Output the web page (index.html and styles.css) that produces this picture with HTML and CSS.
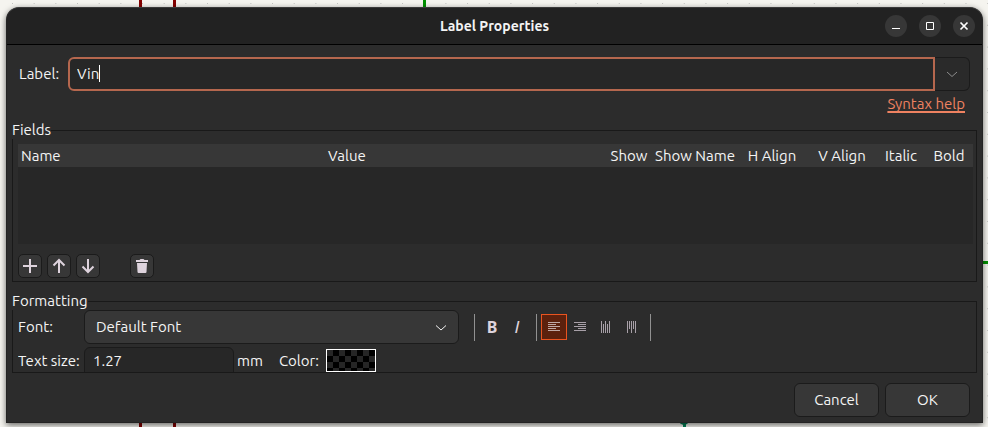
FILE: index.html
```html
<!DOCTYPE html>
<html lang="en">
<head>
<meta charset="utf-8">
<title>Label Properties</title>
<link rel="stylesheet" href="styles.css">
</head>
<body>
<svg class="canvas" aria-hidden="true">
  <defs>
    <pattern id="grid" x="12" y="3" width="21.67" height="21.8" patternUnits="userSpaceOnUse"><rect width="1" height="1" fill="#c4c4c2"/></pattern>
  </defs>
  <rect width="100%" height="100%" fill="url(#grid)"/>
  <path d="M140.500 0V500M174.500 0V500" stroke="#840000" stroke-width="3"/>
  <path d="M424.500 0V20M970 262.500H1000" stroke="#009100" stroke-width="3"/>
  <circle cx="684" cy="420" r="5" fill="#008458"/>
  <path d="M684.500 420V430" stroke="#008458" stroke-width="3"/>
</svg>
<main class="dialog">
  <header class="titlebar">
    <h1>Label Properties</h1>
    <div class="window-buttons">
      <button type="button" aria-label="Minimize"><svg width="22" height="22"><path d="M7 13.500H15"/></svg></button>
      <button type="button" aria-label="Maximize"><svg width="22" height="22"><path d="M7.500 7.500H14.500V14.500H7.500Z"/></svg></button>
      <button type="button" aria-label="Close"><svg width="22" height="22"><path d="M7.500 7.500L14.500 14.500M14.500 7.500L7.500 14.500" stroke-width="1.700"/></svg></button>
    </div>
  </header>
  <form class="content">
    <div class="label-row">
      <label for="net-label">Label:</label>
      <div class="combo">
        <input id="net-label" type="text" value="Vin">
        <span class="caret"></span>
        <button type="button" aria-label="Show labels"><svg width="12" height="8"><path d="M1 2L6 6.500L11 2"/></svg></button>
      </div>
    </div>
    <div class="help"><a href="#">Syntax help</a></div>

    <fieldset class="fields">
      <legend>Fields</legend>
      <div class="grid-area">
        <table>
          <colgroup><col class="c-name"><col><col class="c-show"><col class="c-showname"><col class="c-align"><col class="c-align"><col class="c-style"><col class="c-style"></colgroup>
          <thead><tr><th>Name</th><th>Value</th><th>Show</th><th>Show Name</th><th>H Align</th><th>V Align</th><th>Italic</th><th>Bold</th></tr></thead>
        </table>
      </div>
      <div class="row-tools">
        <button type="button" aria-label="Add field"><svg width="16" height="16"><path d="M8 1V15M1 8H15"/></svg></button>
        <button type="button" aria-label="Move up"><svg width="16" height="16"><path d="M8 15V2M2.500 7.500L8 2L13.500 7.500"/></svg></button>
        <button type="button" aria-label="Move down"><svg width="16" height="16"><path d="M8 1V14M2.500 8.500L8 14L13.500 8.500"/></svg></button>
        <button type="button" class="delete" aria-label="Delete field"><svg width="16" height="16"><path class="solid" d="M2 2H5.500L6.500 1H9.500L10.500 2H14V4H2ZM3 5H13L12.500 14Q12.400 15 11.500 15H4.500Q3.600 15 3.500 14Z"/></svg></button>
      </div>
    </fieldset>

    <fieldset class="formatting">
      <legend>Formatting</legend>
      <div class="format-row">
        <label class="name" for="font">Font:</label>
        <div class="select">
          <select id="font"><option>Default Font</option></select>
          <svg width="12" height="8"><path d="M1 1.500L6 6L11 1.500"/></svg>
        </div>
        <div class="toolbar">
          <span class="separator"></span>
          <button type="button" class="bold">B</button>
          <button type="button" class="italic">I</button>
          <span class="separator"></span>
          <button type="button" class="tool active" aria-label="Align left"><svg width="12" height="12"><path d="M0 1.500H12M0 3.500H8M0 5.500H12M0 7.500H8M0 9.500H12"/></svg></button>
          <button type="button" class="tool" aria-label="Align right"><svg width="12" height="12"><path d="M0 1.500H12M4 3.500H12M0 5.500H12M4 7.500H12M0 9.500H12"/></svg></button>
          <button type="button" class="tool" aria-label="Align bottom"><svg width="12" height="12"><path d="M1.500 0V12M3.500 3V12M5.500 0V12M7.500 3V12M9.500 0V12"/></svg></button>
          <button type="button" class="tool" aria-label="Align top"><svg width="12" height="12"><path d="M1.500 0V12M3.500 0V8M5.500 0V12M7.500 0V8M9.500 0V12"/></svg></button>
          <span class="separator"></span>
        </div>
      </div>
      <div class="format-row size-row">
        <label class="name" for="size">Text size:</label>
        <input id="size" type="text" value="1.27">
        <span class="unit">mm</span>
        <label class="color-label" for="color">Color:</label>
        <button type="button" id="color" class="swatch" aria-label="Color"></button>
      </div>
    </fieldset>

    <footer>
      <button type="button">Cancel</button>
      <button type="submit">OK</button>
    </footer>
  </form>
</main>
</body>
</html>
```
FILE: styles.css
```css
* { box-sizing: border-box; }

body {
  margin: 0;
  padding: 7px 5px 4px 6px;
  min-height: 100vh;
  overflow: hidden;
  background: #f5f4ef;
  color: #f4f4f4;
  font: 15px/20px Ubuntu, "Noto Sans", sans-serif;
}

button, input, select {
  margin: 0;
  font: inherit;
  color: inherit;
}

button { padding: 0; }

svg {
  display: block;
  fill: none;
  stroke: currentColor;
}

.canvas {
  position: absolute;
  inset: 0;
  width: 100%;
  height: 100%;
  stroke: none;
}

.dialog {
  position: relative;
  background: #2c2c2c;
  border: 1px solid #242424;
  border-top-color: #3a3a3a;
  border-radius: 13px 13px 0 0;
  box-shadow: 0 2px 6px rgba(0, 0, 0, .6);
}

.titlebar {
  display: grid;
  grid-template-columns: 1fr auto 1fr;
  align-items: center;
  height: 37px;
  padding: 0 7px;
  background: #222;
  border-bottom: 1px solid #000;
  border-radius: 12px 12px 0 0;
}

h1 {
  grid-column: 2;
  margin: 0;
  font-size: 14px;
  font-weight: 700;
}

.window-buttons {
  display: flex;
  justify-content: flex-end;
  gap: 12px;
}

.window-buttons button {
  width: 22px;
  height: 22px;
  border: 0;
  border-radius: 50%;
  background: #373737;
  color: #fff;
}

.content { padding: 12px 5px 5px; }

.label-row {
  display: flex;
  align-items: center;
  gap: 8px;
  padding: 0 7px;
}

.label-row label { width: 41px; }

.combo {
  position: relative;
  display: flex;
  flex: 1;
}

.combo input {
  flex: 1;
  min-width: 0;
  height: 34px;
  padding: 0 7px 2px;
  border: 2px solid #b5674e;
  border-radius: 6px 0 0 6px;
  background: #272727;
  outline: 0;
}

.caret {
  position: absolute;
  left: 31px;
  top: 8px;
  width: 1px;
  height: 17px;
  background: #fff;
}

.combo button {
  display: grid;
  place-items: center;
  width: 35px;
  border: 1px solid #1b1b1b;
  border-left: 0;
  border-radius: 0 6px 6px 0;
  background: #2a2a2a;
  color: #8c8c8c;
}

.help {
  padding: 3px 12px 0;
  text-align: right;
}

.help a {
  color: #ef8261;
  text-decoration-thickness: 2px;
  text-underline-offset: 2px;
  text-decoration-skip-ink: none;
}

fieldset {
  min-width: 0;
  margin: 7px 0 0;
  border: 1px solid #191919;
}

legend {
  margin-left: -6px;
  padding: 0;
  line-height: 18px;
}

.fields { padding: 5px 3px 3px 5px; }

.grid-area {
  height: 100px;
  background: #272727;
}

table {
  width: 100%;
  table-layout: fixed;
  border-collapse: collapse;
}

th {
  height: 23px;
  padding: 0;
  background: #373737;
  font-weight: 400;
  white-space: nowrap;
}

th:nth-child(-n+2) {
  padding-left: 3px;
  text-align: left;
}

.c-name { width: 307px; }
.c-show { width: 48px; }
.c-showname { width: 84px; }
.c-align { width: 70px; }
.c-style { width: 48px; }

.row-tools {
  display: flex;
  gap: 5px;
  margin-top: 10px;
}

.row-tools button {
  display: grid;
  place-items: center;
  width: 24px;
  height: 24px;
  border: 1px solid #1b1b1b;
  border-radius: 5px;
  background: #373737;
  color: #ded3dd;
}

.row-tools svg { stroke-width: 2; }
.row-tools .delete { margin-left: 25px; }

.solid {
  fill: currentColor;
  stroke: none;
}

.formatting {
  margin-top: 10px;
  padding: 0 5px;
}

.format-row {
  display: flex;
  align-items: center;
}

.name { width: 66px; }

.select {
  position: relative;
  flex: 0 1 375px;
}

.select select {
  display: block;
  width: 100%;
  height: 34px;
  padding: 0 11px;
  appearance: none;
  border: 1px solid #1b1b1b;
  border-radius: 6px;
  background: #373737;
}

.select svg {
  position: absolute;
  right: 12px;
  top: 14px;
  pointer-events: none;
}

.toolbar {
  display: flex;
  align-items: center;
  margin-left: 15px;
}

.toolbar button {
  display: grid;
  place-items: center;
  width: 26px;
  height: 26px;
  border: 1px solid transparent;
  background: none;
  color: #ded3dd;
}

.toolbar .bold {
  margin-left: 4px;
  font: 700 16px/20px "Noto Sans", sans-serif;
}

.toolbar .italic {
  width: 24px;
  margin-right: 7px;
  font-size: 16px;
  font-style: italic;
  font-weight: 500;
}

.toolbar .tool { color: #a8a0a8; }

.toolbar .active {
  margin-left: 4px;
  border-color: #e95420;
  background: #5c210d;
  color: #c0a9a5;
}

.separator {
  width: 1px;
  height: 27px;
  background: #919191;
}

.tool + .separator { margin-left: 5px; }

.size-row {
  align-items: flex-start;
  height: 25px;
  margin-top: 3px;
  overflow: hidden;
  line-height: 28px;
}

.size-row input {
  width: 150px;
  height: 34px;
  padding: 0 8px 8px;
  border: 1px solid #1b1b1b;
  border-radius: 6px;
  background: #272727;
}

.unit { margin-left: 3px; }
.color-label { margin: 0 7px 0 16px; }

.swatch {
  width: 50px;
  height: 23px;
  margin-top: 2px;
  border: 1px solid #fff;
  background: repeating-conic-gradient(#000 0 25%, #262626 0 50%) 0 0 / 12px 12px;
}

footer {
  display: flex;
  justify-content: flex-end;
  gap: 6px;
  margin-top: 10px;
  padding-right: 7px;
}

footer button {
  width: 85px;
  height: 34px;
  border: 1px solid #1b1b1b;
  border-radius: 6px;
  background: #373737;
}
```
